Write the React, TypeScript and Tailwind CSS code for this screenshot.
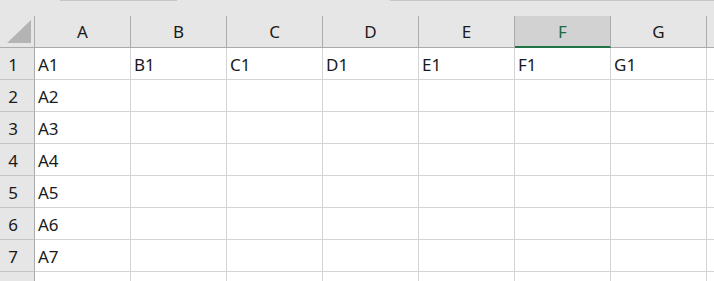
const columns = ["A", "B", "C", "D", "E", "F", "G"];
const rows = [1, 2, 3, 4, 5, 6, 7, 8];

const selectedCol = "F";

function cellValue(col: string, row: number) {
    if (row === 1) return `${col}1`;
    if (col === "A" && row <= 7) return `A${row}`;
    return "";
}

export default function App() {
    return (
        <div
            className="w-[714px] h-[281px] overflow-hidden bg-white text-[#1a1a1a]"
            style={{ fontFamily: '"Noto Sans", "Open Sans", sans-serif' }}
        >
            {/* strip above the headers */}
            <div className="h-[16px] flex bg-[#e6e6e6]">
                <div className="w-[60px]" />
                <div className="w-[117px] border-t border-[#c6c6c6]" />
                <div className="w-[213px]" />
                <div className="flex-1 border-t border-[#c6c6c6]" />
            </div>

            {/* column headers */}
            <div className="flex h-[32px]">
                <div className="w-[35px] shrink-0 bg-[#e6e6e6] border-r border-b border-[#ababab]">
                    <svg width="34" height="31" viewBox="0 0 34 31">
                        <polygon points="7,27 31,27 31,4" fill="#b4b4b4" />
                    </svg>
                </div>
                {columns.map(col => (
                    <div
                        key={col}
                        className={
                            col === selectedCol
                                ? "w-[96px] shrink-0 flex items-center justify-center bg-[#d2d2d2] border-r border-[#ababab] border-b-2 border-b-[#217346] text-[#1e6b41] text-[17px]"
                                : "w-[96px] shrink-0 flex items-center justify-center bg-[#e6e6e6] border-r border-b border-[#ababab] text-[17px]"
                        }
                    >
                        <span className={col === selectedCol ? "pt-[1px]" : ""}>{col}</span>
                    </div>
                ))}
                <div className="flex-1 bg-[#e6e6e6] border-b border-[#ababab]" />
            </div>

            {/* grid; the 8th row is only partly in view, so its number is left out */}
            {rows.map(row => (
                <div key={row} className="flex h-[32px]">
                    <div className="w-[35px] shrink-0 flex items-center justify-center pr-[8px] pt-[2px] bg-[#e6e6e6] border-r border-r-[#ababab] border-b border-b-[#c4c4c4] text-[17px]">
                        {row < 8 ? row : ""}
                    </div>
                    {columns.map(col => (
                        <div
                            key={col}
                            className="w-[96px] shrink-0 flex items-center pl-[3px] pt-[2px] border-r border-b border-[#d4d4d4] text-[17px] whitespace-nowrap"
                        >
                            {cellValue(col, row)}
                        </div>
                    ))}
                    <div className="flex-1 border-b border-[#d4d4d4]" />
                </div>
            ))}
        </div>
    );
}
